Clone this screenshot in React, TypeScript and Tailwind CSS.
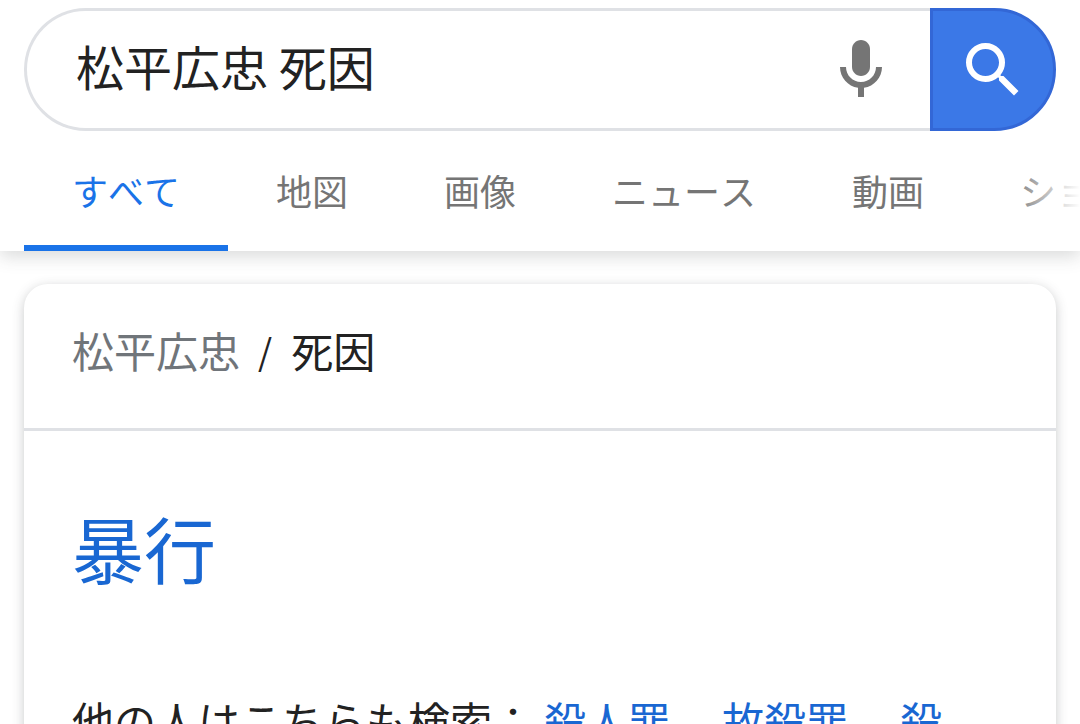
const tabs = [
  { label: 'すべて', active: true },
  { label: '地図' },
  { label: '画像' },
  { label: 'ニュース' },
  { label: '動画' },
  { label: 'ショッピング' },
]

const related = ['殺人罪', '故殺罪', '殺']

function MicIcon() {
  return (
    <svg viewBox="0 0 24 24" className="h-[72px] w-[72px] fill-[#757575]">
      <path d="M12 14c1.66 0 3-1.34 3-3V5c0-1.66-1.34-3-3-3S9 3.34 9 5v6c0 1.66 1.34 3 3 3z" />
      <path d="M17 11c0 2.76-2.24 5-5 5s-5-2.24-5-5H5c0 3.53 2.61 6.43 6 6.92V21h2v-3.08c3.39-.49 6-3.39 6-6.92h-2z" />
    </svg>
  )
}

function SearchIcon() {
  return (
    <svg viewBox="0 0 24 24" className="h-[72px] w-[72px] fill-white">
      <path d="M15.5 14h-.79l-.28-.27A6.471 6.471 0 0 0 16 9.5 6.5 6.5 0 1 0 9.5 16c1.61 0 3.09-.59 4.23-1.57l.27.28v.79l5 4.99L20.49 19l-4.99-5zm-6 0C7.01 14 5 11.99 5 9.5S7.01 5 9.5 5 14 7.01 14 9.5 11.99 14 9.5 14z" />
    </svg>
  )
}

export default function App() {
  return (
    <div className="h-[724px] w-[1080px] overflow-hidden bg-white font-['Noto_Sans_CJK_JP','Noto_Sans',sans-serif] text-[#222222] [font-kerning:none]">
      {/* Header */}
      <div className="relative z-10 h-[251px] bg-white shadow-[0_6px_16px_rgba(60,64,67,0.18)]">
        <div className="px-6 pt-2">
          <div className="flex h-[123px] items-stretch">
            <div className="flex flex-1 items-center justify-between rounded-l-[62px] border-[3px] border-r-0 border-[#dfe1e5] pl-[49px] pr-[33px]">
              <span className="whitespace-pre pb-[10px] text-[48px] leading-none">松平広忠 死因</span>
              <MicIcon />
            </div>
            <button className="flex w-[126px] items-center justify-center rounded-r-[62px] border-[3px] border-[#3367d6] bg-[#3b78e7]">
              <SearchIcon />
            </button>
          </div>
        </div>

        {/* Tabs */}
        <div className="relative flex h-[120px] overflow-hidden px-6">
          {tabs.map((tab) => (
            <div
              key={tab.label}
              className={`flex shrink-0 items-center whitespace-nowrap border-b-[6px] px-12 pt-1 text-[36px] leading-none ${
                tab.active ? 'border-[#1a73e8] text-[#1a73e8]' : 'border-transparent text-[#757575]'
              }`}
            >
              {tab.label}
            </div>
          ))}
          <div className="absolute inset-y-0 right-0 w-[72px] bg-gradient-to-r from-white/0 to-white" />
        </div>
      </div>

      {/* Result card */}
      <div className="mx-6 mt-[33px] h-[600px] rounded-[24px] bg-white shadow-[0_3px_12px_rgba(60,64,67,0.28)]">
        <div className="flex h-[147px] items-center border-b-[3px] border-[#dfe1e5] px-12 pb-[12px] text-[42px] leading-none">
          <span className="text-[#70757a]">松平広忠</span>
          <span className="ml-[18px] mr-[19px] text-[36px]">/</span>
          <span>死因</span>
        </div>
        <div className="px-12">
          <div className="pt-[80px] text-[72px] leading-none text-[#1967d2]">暴行</div>
          <div className="mt-[116px] flex whitespace-nowrap text-[42px] leading-none">
            <span>他の人はこちらも検索：</span>
            <div className="ml-[10px] flex gap-[52px] text-[#1967d2]">
              {related.map((item) => (
                <span key={item}>{item}</span>
              ))}
            </div>
          </div>
        </div>
      </div>
    </div>
  )
}
